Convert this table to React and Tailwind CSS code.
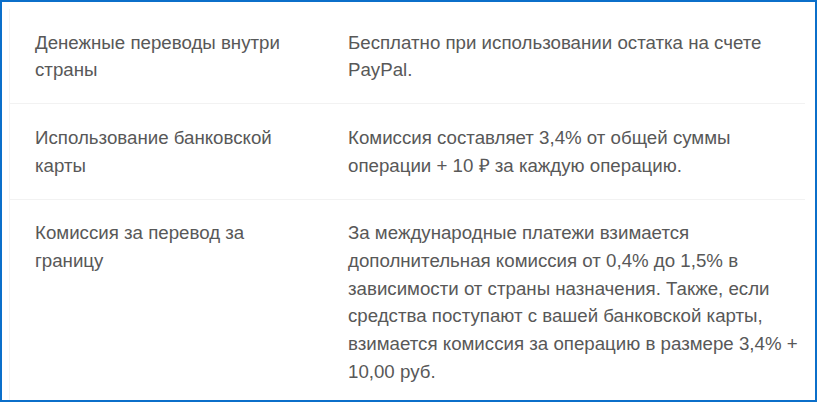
const rows = [
  {
    name: "Денежные переводы внутри страны",
    fee: "Бесплатно при использовании остатка на счете PayPal.",
  },
  {
    name: "Использование банковской карты",
    fee: "Комиссия составляет 3,4% от общей суммы операции + 10 ₽ за каждую операцию.",
  },
  {
    name: "Комиссия за перевод за границу",
    fee: "За международные платежи взимается дополнительная комиссия от 0,4% до 1,5% в зависимости от страны назначения. Также, если средства поступают с вашей банковской карты, взимается комиссия за операцию в размере 3,4% + 10,00 руб.",
  },
];

const App = () => {
  return (
    <div className="w-[817px] h-[402px] overflow-hidden bg-white border-2 border-[#0b6fca] pl-[7px] pt-[7px] pr-[10px] font-['Liberation_Sans',Arial,sans-serif]">
      {/* Fees table */}
      <div className="border-l border-[#f3f3f3] text-[18.7px] leading-[27.7px] text-[#585858]">
        {rows.map((row, i) => (
          <div
            key={i}
            className={`flex ${i < rows.length - 1 ? "border-b border-[#f2f2f2]" : ""}`}
          >
            <div className="w-[338px] shrink-0 pl-[25px] pr-[45px] py-[19.5px]">
              {row.name}
            </div>
            <div className="w-[456px] pr-[2px] py-[19.5px]">{row.fee}</div>
          </div>
        ))}
      </div>
    </div>
  );
};

export default App;
